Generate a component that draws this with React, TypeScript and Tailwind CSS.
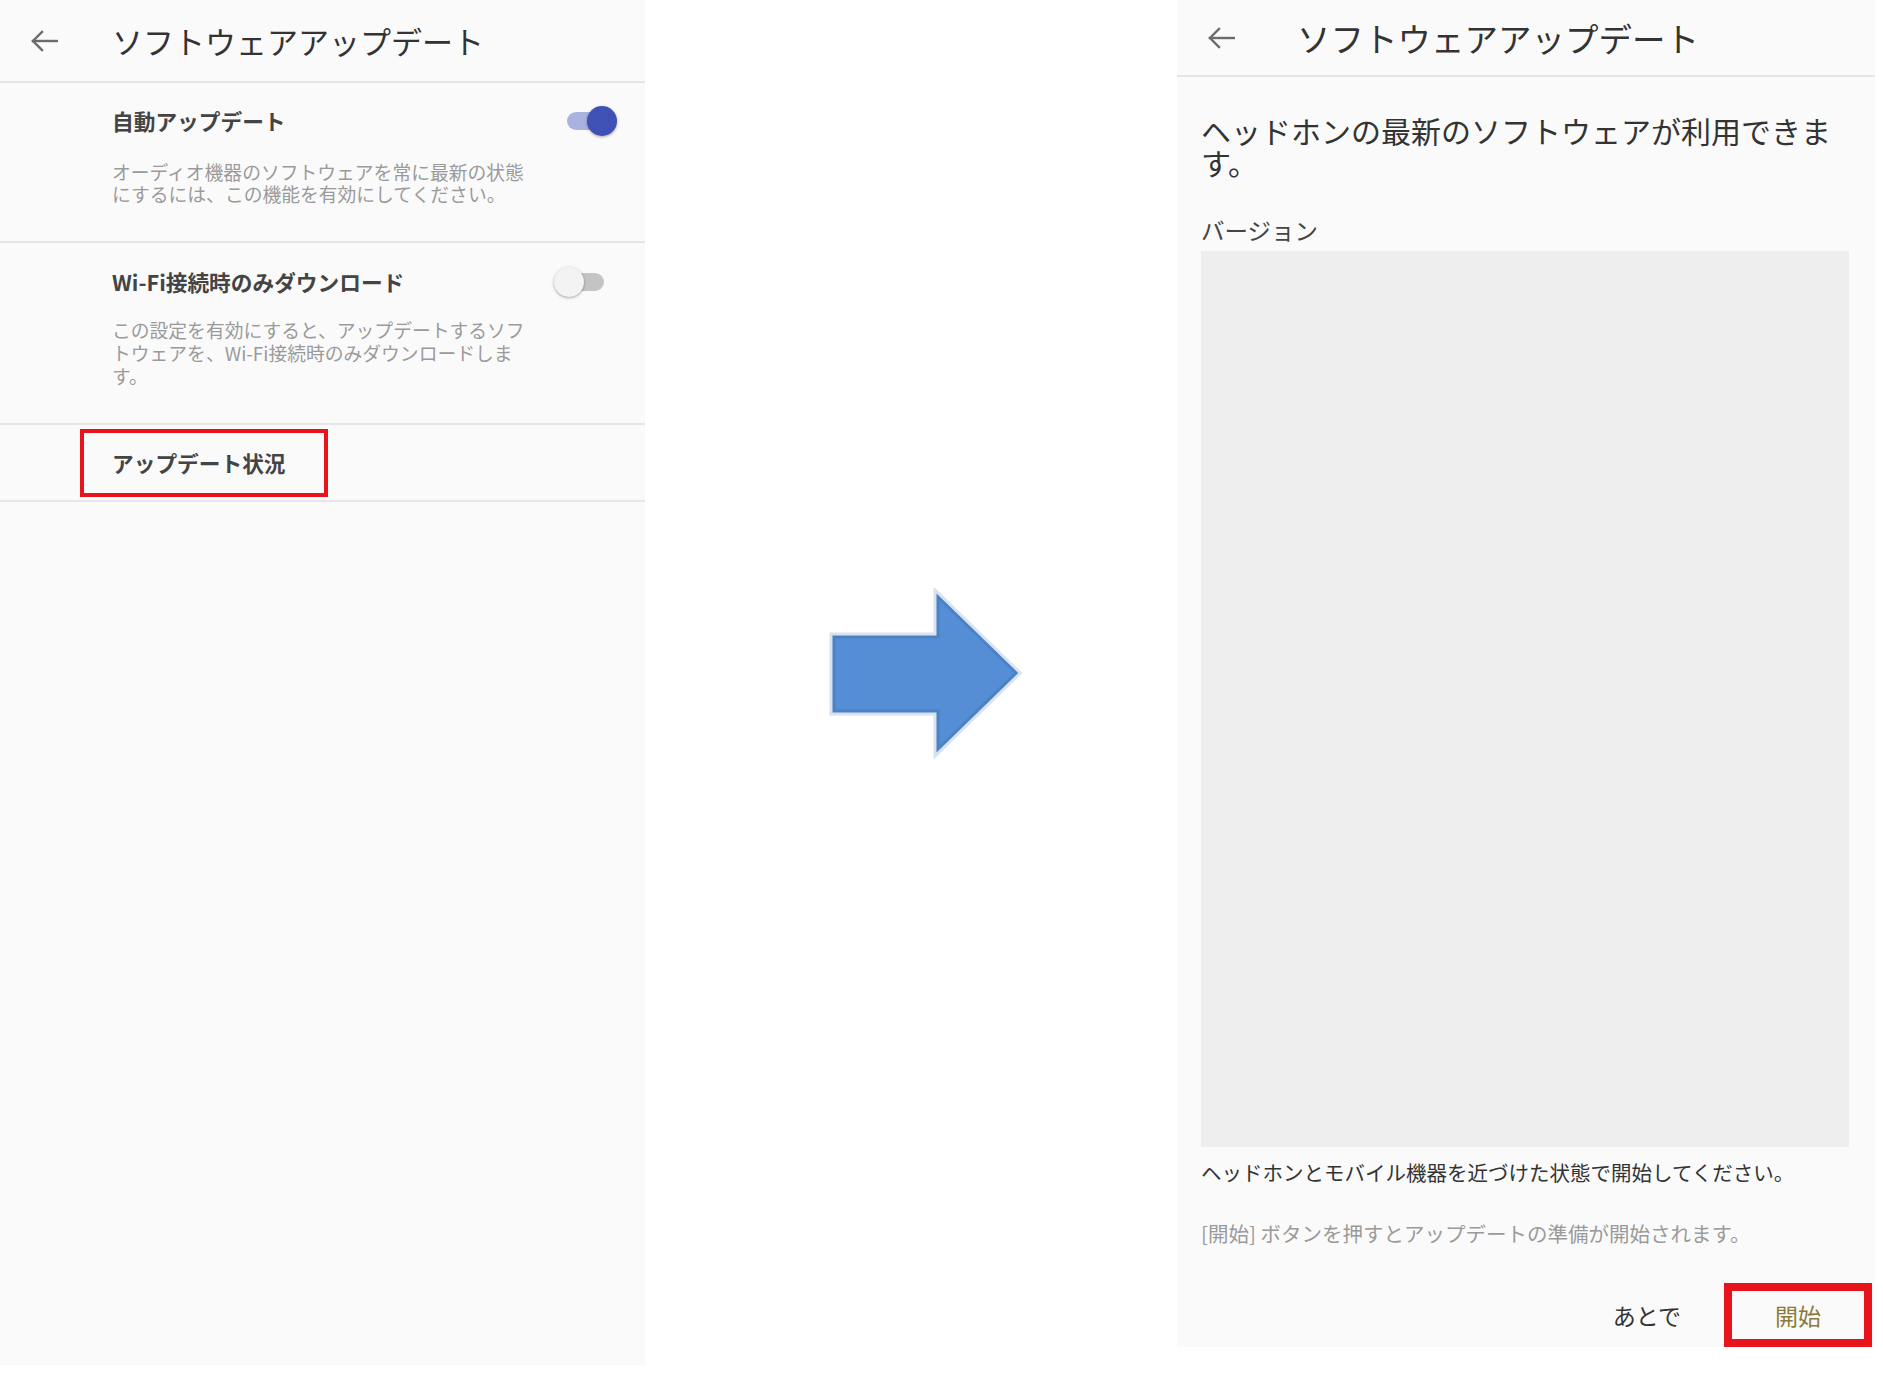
import React from "react";

function BackArrow() {
  return (
    <svg width="28" height="24" viewBox="0 0 28 24" fill="none" stroke="#6b6b6b" strokeWidth="2.4" strokeLinecap="square">
      <line x1="3" y1="12" x2="27" y2="12" />
      <polyline points="12,3 3,12 12,21" />
    </svg>
  );
}

function Toggle({ on }: { on: boolean }) {
  if (on) {
    return (
      <div className="relative w-[50px] h-[30px] shrink-0">
        <div className="absolute left-0 top-[6px] w-[44px] h-[18px] rounded-full bg-[#aab3df]" />
        <div className="absolute right-0 top-0 w-[30px] h-[30px] rounded-full bg-[#3f51b5] shadow-[0_1px_3px_rgba(0,0,0,0.35)]" />
      </div>
    );
  }
  return (
    <div className="relative w-[50px] h-[30px] shrink-0">
      <div className="absolute right-0 top-[6px] w-[42px] h-[18px] rounded-full bg-[#c4c4c4]" />
      <div className="absolute left-0 top-0 w-[30px] h-[30px] rounded-full bg-[#f3f3f3] shadow-[0_1px_3px_rgba(0,0,0,0.35)]" />
    </div>
  );
}

function SettingsScreen() {
  return (
    <div className="w-[645px] h-[1365px] bg-[#fafafa] flex flex-col">
      <header className="h-[83px] flex items-center border-b-2 border-[#e6e6e6]">
        <div className="w-[112px] pl-[30px]">
          <BackArrow />
        </div>
        <h1 className="text-[31px] leading-[40px] text-[#333]">ソフトウェアアップデート</h1>
      </header>

      <section className="h-[160px] pl-[112px] pr-[28px] pt-[24px] border-b-2 border-[#e6e6e6]">
        <div className="flex items-center justify-between h-[28px]">
          <span className="text-[21.7px] leading-[28px] font-bold text-[#444]">自動アップデート</span>
          <Toggle on />
        </div>
        <p className="mt-[26px] text-[18.8px] leading-[22px] text-[#9a9a9a] whitespace-nowrap">
          オーディオ機器のソフトウェアを常に最新の状態
          <br />
          にするには、この機能を有効にしてください。
        </p>
      </section>

      <section className="h-[182px] pl-[112px] pr-[41px] pt-[25px] border-b-2 border-[#e6e6e6]">
        <div className="flex items-center justify-between h-[28px]">
          <span className="text-[21.7px] leading-[28px] font-bold text-[#444]">Wi-Fi接続時のみダウンロード</span>
          <Toggle on={false} />
        </div>
        <p className="mt-[22px] text-[18.8px] leading-[23px] text-[#9a9a9a] whitespace-nowrap">
          この設定を有効にすると、アップデートするソフ
          <br />
          トウェアを、Wi-Fi接続時のみダウンロードしま
          <br />
          す。
        </p>
      </section>

      <section className="h-[77px] pl-[80px] pt-[4px] border-b-2 border-[#e6e6e6]">
        <div className="w-[248px] h-[68px] border-4 border-[#e8141c] pl-[28px] flex items-center">
          <span className="text-[21.7px] leading-[28px] font-bold text-[#444]">アップデート状況</span>
        </div>
      </section>
    </div>
  );
}

function FlowArrow() {
  return (
    <svg width="200" height="172" viewBox="0 0 200 172">
      <polygon
        points="8,49 112,49 112,9 190,85 112,161 112,123 8,123"
        fill="#d9e2ee"
        stroke="#d9e2ee"
        strokeWidth="9"
        strokeLinejoin="miter"
      />
      <polygon
        points="8,49 112,49 112,9 190,85 112,161 112,123 8,123"
        fill="#558ed5"
        stroke="#4a82c6"
        strokeWidth="3"
        strokeLinejoin="miter"
      />
    </svg>
  );
}

function UpdateScreen() {
  return (
    <div className="w-[698px] bg-[#fafafa] flex flex-col">
      <header className="h-[77px] flex items-center border-b-2 border-[#e6e6e6]">
        <div className="w-[120px] pl-[30px]">
          <BackArrow />
        </div>
        <h1 className="text-[33.5px] leading-[40px] text-[#333]">ソフトウェアアップデート</h1>
      </header>

      <div className="pl-[24px] pr-[26px] pt-[37px] flex flex-col">
        <p className="text-[30px] leading-[32px] text-[#333] whitespace-nowrap">
          ヘッドホンの最新のソフトウェアが利用できま
          <br />
          す。
        </p>
        <p className="mt-[38px] text-[23.5px] leading-[28px] text-[#444]">バージョン</p>
        <div className="mt-[7px] h-[896px] bg-[#eeeeee]" />
        <p className="mt-[12px] text-[20.5px] leading-[26px] text-[#333] whitespace-nowrap">
          ヘッドホンとモバイル機器を近づけた状態で開始してください。
        </p>
        <p className="mt-[35px] text-[20.5px] leading-[26px] text-[#9a9a9a] whitespace-nowrap">
          [開始] ボタンを押すとアップデートの準備が開始されます。
        </p>
      </div>

      <div className="mt-[37px] flex items-center justify-end pr-[3px]">
        <button className="text-[23px] leading-[30px] text-[#333] mr-[43px]">あとで</button>
        <button className="w-[148px] h-[64px] border-[8px] border-[#e8141c] flex items-center justify-center text-[23px] leading-[30px] text-[#8c7a3a]">
          開始
        </button>
      </div>
    </div>
  );
}

export default function App() {
  return (
    <div className="w-[1883px] h-[1375px] bg-white flex items-start font-['Noto_Sans_CJK_JP','Noto_Sans',sans-serif]">
      <SettingsScreen />
      <div className="w-[532px] pl-[181px] pt-[588px]">
        <FlowArrow />
      </div>
      <UpdateScreen />
    </div>
  );
}
